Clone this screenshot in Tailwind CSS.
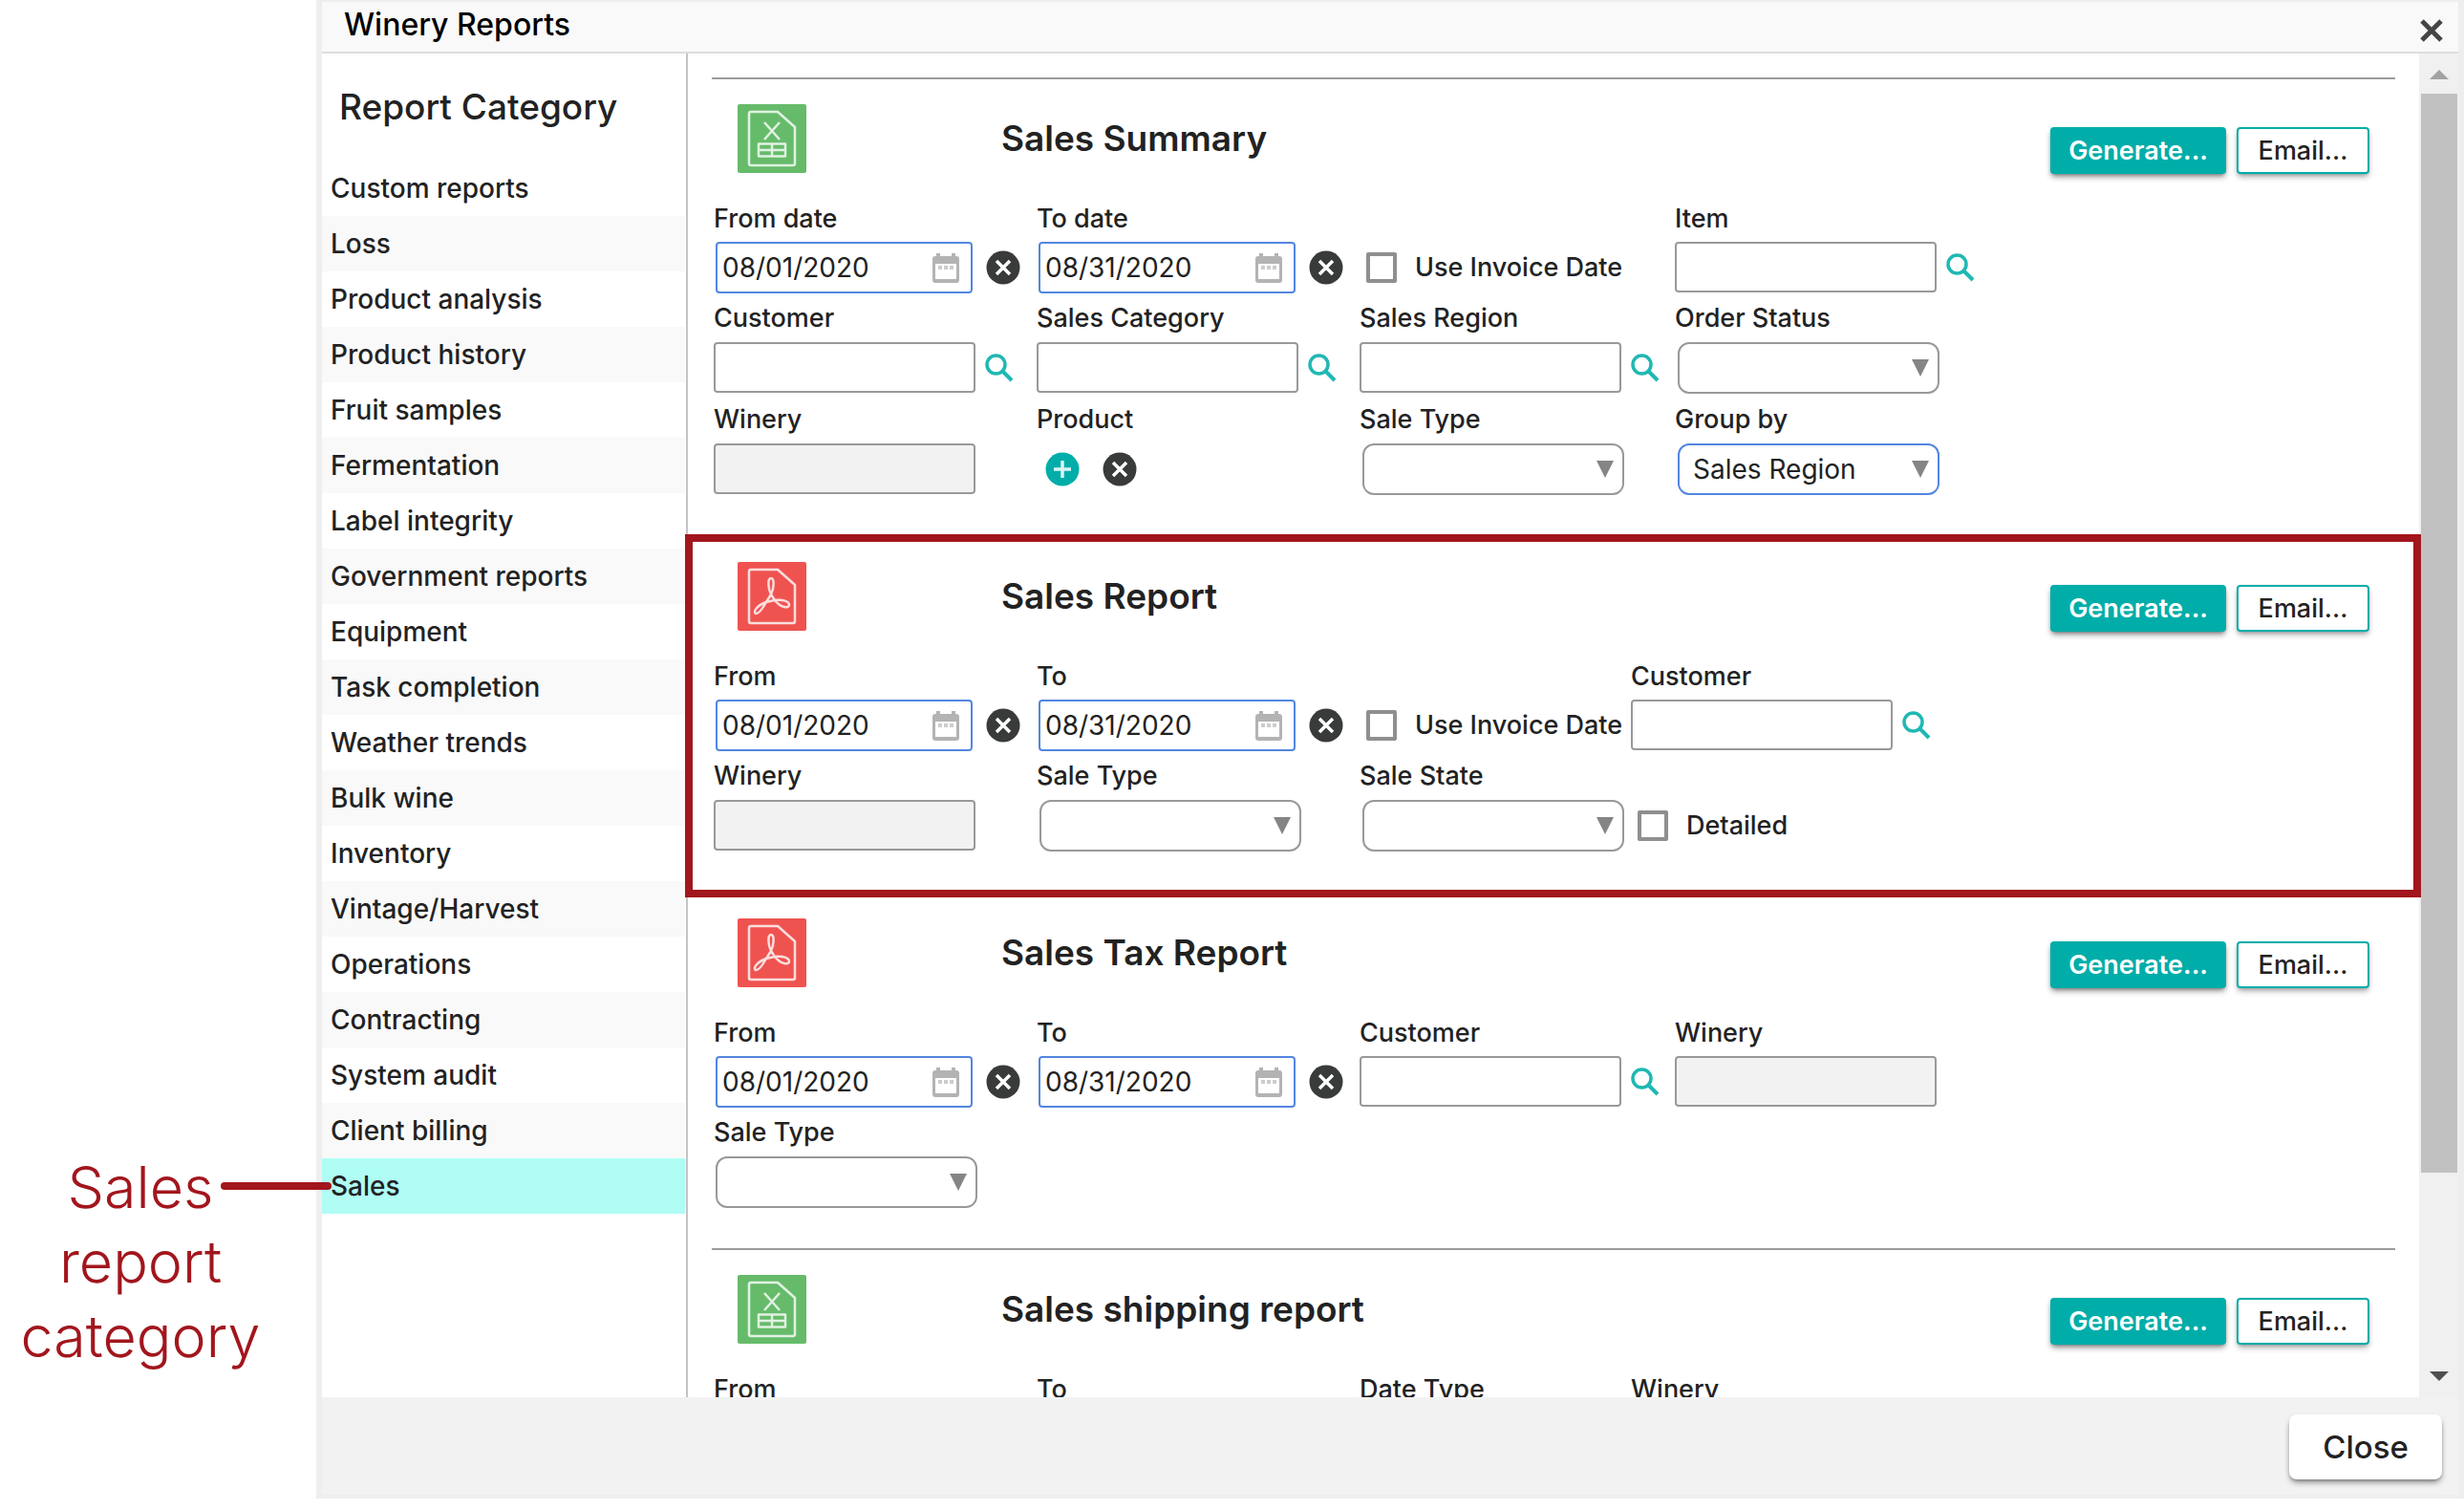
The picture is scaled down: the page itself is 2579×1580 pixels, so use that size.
<!DOCTYPE html>
<html lang="en">
<head>
<meta charset="utf-8">
<title>Winery Reports</title>
<script src="https://cdn.jsdelivr.net/npm/@tailwindcss/browser@4"></script>
</head>
<body class="bg-white font-['Inter',sans-serif] text-[27px] leading-8 font-medium text-[#222]">

<svg class="hidden" aria-hidden="true">
  <symbol id="xls" viewBox="0 0 72 72">
    <rect width="72" height="72" rx="2" fill="#66bb6a"/>
    <g fill="none" stroke="#e0f2e1" stroke-width="2.500" stroke-linejoin="round">
      <path d="M14 8h28l18 16v38a2 2 0 0 1-2 2H14a2 2 0 0 1-2-2V10a2 2 0 0 1 2-2z"/>
      <path d="M28 19l16 18M44 19L28 37"/>
      <path d="M22 41.500h28v13H22zM22 48h28M36 41.500v13"/>
    </g>
  </symbol>
  <symbol id="pdf" viewBox="0 0 72 72">
    <rect width="72" height="72" rx="2" fill="#ef5350"/>
    <g fill="none" stroke="#fcdedd" stroke-width="2.500" stroke-linejoin="round">
      <path d="M14 8h28l18 16v38a2 2 0 0 1-2 2H14a2 2 0 0 1-2-2V10a2 2 0 0 1 2-2z"/>
      <path d="M35 34c-3-6-4-17 0-17s3 11 0 17l-5 8c-4 7-8 13-11 12s0-8 11-12l9-2c8-1 15 1 15 5s-9 3-15-5z"/>
    </g>
  </symbol>
  <symbol id="cal" viewBox="0 0 28 32">
    <path d="M4 1h4v3h12V1h4v3h1a3 3 0 0 1 3 3v22a3 3 0 0 1-3 3H3a3 3 0 0 1-3-3V7a3 3 0 0 1 3-3h1z" fill="#b3b3b3"/>
    <path d="M3 12h22v16H3z" fill="#fff"/>
    <path d="M6 14h4v4H6zM12 14h4v4h-4zM18 14h4v4h-4z" fill="#ccc"/>
  </symbol>
  <symbol id="clear" viewBox="0 0 36 36">
    <circle cx="18" cy="18" r="17.500" fill="#393b3b"/>
    <path d="M11 11l14 14M25 11L11 25" stroke="#fff" stroke-width="3.500"/>
  </symbol>
  <symbol id="add" viewBox="0 0 36 36">
    <circle cx="18" cy="18" r="17.500" fill="#00ada9"/>
    <path d="M18 9v18M9 18h18" stroke="#d9f5f4" stroke-width="3.500"/>
  </symbol>
  <symbol id="find" viewBox="0 0 30 30">
    <circle cx="11.500" cy="11.500" r="9.500" fill="none" stroke="#20b8b3" stroke-width="3.500"/>
    <path d="M18 18l10 10" stroke="#20b8b3" stroke-width="4"/>
  </symbol>
  <symbol id="down" viewBox="0 0 18 18"><path d="M0 0h18L9 18z" fill="#858585"/></symbol>
</svg>

<div class="flex h-screen overflow-hidden pb-3">

  <!-- Callout beside the dialog -->
  <aside class="relative z-20 flex w-[331px] shrink-0 flex-col justify-end pb-[131px] text-[61px] leading-[78px] font-light text-[#a2161d]">
    <p class="relative w-[294px] text-center">Sales<span class="absolute top-[34px] left-[231px] h-2 w-[116px] rounded-full bg-[#a2161d]"></span></p>
    <p class="w-[294px] text-center">report</p>
    <p class="w-[294px] text-center">category</p>
  </aside>

  <div role="dialog" aria-labelledby="dlg-title" class="flex min-w-0 flex-1 flex-col border-x-[6px] border-t-2 border-b-4 border-[#eee]">
    <header class="flex h-[54px] shrink-0 items-center justify-between border-b-2 border-[#ddd] bg-[#f9f9f9] pr-4 pl-[23px]">
      <h1 id="dlg-title" class="pb-1 text-[32px] leading-9 text-black">Winery Reports</h1>
      <button type="button" aria-label="Close dialog" class="pt-2"><svg class="size-6" viewBox="0 0 24 24"><path d="M2 2l20 20M22 2L2 22" stroke="#444646" stroke-width="5"/></svg></button>
    </header>

    <div class="flex min-h-0 flex-1">
      <nav class="w-[383px] shrink-0 border-r-2 border-[#c4c4c4] text-[28px]">
        <h2 class="flex h-28 items-center pl-[18px] text-[37px] leading-10">Report Category</h2>
        <ul class="mr-px *:h-[58px] *:even:bg-[#f9f9f9]">
          <li><a href="#" class="flex h-full items-center pl-[9px]">Custom reports</a></li>
          <li><a href="#" class="flex h-full items-center pl-[9px]">Loss</a></li>
          <li><a href="#" class="flex h-full items-center pl-[9px]">Product analysis</a></li>
          <li><a href="#" class="flex h-full items-center pl-[9px]">Product history</a></li>
          <li><a href="#" class="flex h-full items-center pl-[9px]">Fruit samples</a></li>
          <li><a href="#" class="flex h-full items-center pl-[9px]">Fermentation</a></li>
          <li><a href="#" class="flex h-full items-center pl-[9px]">Label integrity</a></li>
          <li><a href="#" class="flex h-full items-center pl-[9px]">Government reports</a></li>
          <li><a href="#" class="flex h-full items-center pl-[9px]">Equipment</a></li>
          <li><a href="#" class="flex h-full items-center pl-[9px]">Task completion</a></li>
          <li><a href="#" class="flex h-full items-center pl-[9px]">Weather trends</a></li>
          <li><a href="#" class="flex h-full items-center pl-[9px]">Bulk wine</a></li>
          <li><a href="#" class="flex h-full items-center pl-[9px]">Inventory</a></li>
          <li><a href="#" class="flex h-full items-center pl-[9px]">Vintage/Harvest</a></li>
          <li><a href="#" class="flex h-full items-center pl-[9px]">Operations</a></li>
          <li><a href="#" class="flex h-full items-center pl-[9px]">Contracting</a></li>
          <li><a href="#" class="flex h-full items-center pl-[9px]">System audit</a></li>
          <li><a href="#" class="flex h-full items-center pl-[9px]">Client billing</a></li>
          <li><a href="#" aria-current="page" class="flex h-full items-center bg-[#b0fdf6] pl-[9px]">Sales</a></li>
        </ul>
      </nav>

      <div class="relative min-w-0 flex-1">
        <main class="-mr-0.5 -ml-[3px] h-full overflow-hidden pt-[25px] pr-[27px] pl-7">

          <section class="border-t-2 border-[#9b9b9b] pb-[41px] pl-0.5">
            <div class="flex h-[130px] items-start pt-[26px] pr-[27px]">
              <svg class="ml-[25px] size-[72px]"><use href="#xls"/></svg>
              <h3 class="ml-[204px] flex-1 pt-4 text-[37px] leading-10 font-semibold">Sales Summary</h3>
              <div class="flex gap-[11px] pt-6">
                <button type="button" class="h-[49px] w-[184px] rounded bg-[#00ada9] font-semibold text-white shadow-md shadow-black/40">Generate...</button>
                <button type="button" class="h-[49px] w-[139px] rounded border-2 border-[#00ada9] bg-white shadow-md shadow-black/30">Email...</button>
              </div>
            </div>
            <div class="grid grid-cols-[338px_338px_330px_1fr] gap-y-3">
              <div><label for="a1" class="block h-10">From date</label>
                <div class="flex h-[54px] items-center pl-0.5"><div class="flex h-full w-[269px] items-center rounded border-2 border-[#5386e0] pr-3 pl-[5px]"><input id="a1" type="text" value="08/01/2020" class="w-full min-w-0 flex-1 text-[28px] font-normal"><svg class="h-8 w-7"><use href="#cal"/></svg></div><button type="button" aria-label="Clear from date" class="ml-3.5"><svg class="size-9"><use href="#clear"/></svg></button></div></div>
              <div><label for="a2" class="block h-10">To date</label>
                <div class="flex h-[54px] items-center pl-0.5"><div class="flex h-full w-[269px] items-center rounded border-2 border-[#5386e0] pr-3 pl-[5px]"><input id="a2" type="text" value="08/31/2020" class="w-full min-w-0 flex-1 text-[28px] font-normal"><svg class="h-8 w-7"><use href="#cal"/></svg></div><button type="button" aria-label="Clear to date" class="ml-3.5"><svg class="size-9"><use href="#clear"/></svg></button></div></div>
              <div class="flex items-end"><label class="flex h-[54px] items-center gap-[19px] pl-[7px] whitespace-nowrap"><input type="checkbox" class="size-8 appearance-none rounded-xs border-4 border-[#8f8f8f] bg-white">Use Invoice Date</label></div>
              <div><label for="a3" class="block h-10">Item</label>
                <div class="flex gap-[10px]"><input id="a3" type="text" class="h-[53px] w-[274px] rounded border-2 border-[#999] px-2"><button type="button" aria-label="Find item"><svg class="size-[30px]"><use href="#find"/></svg></button></div></div>

              <div><label for="a4" class="block h-[39px] leading-7">Customer</label>
                <div class="flex gap-[10px]"><input id="a4" type="text" class="h-[53px] w-[274px] rounded border-2 border-[#999] px-2"><button type="button" aria-label="Find customer"><svg class="size-[30px]"><use href="#find"/></svg></button></div></div>
              <div><label for="a5" class="block h-[39px] leading-7">Sales Category</label>
                <div class="flex gap-[10px]"><input id="a5" type="text" class="h-[53px] w-[274px] rounded border-2 border-[#999] px-2"><button type="button" aria-label="Find sales category"><svg class="size-[30px]"><use href="#find"/></svg></button></div></div>
              <div><label for="a6" class="block h-[39px] leading-7">Sales Region</label>
                <div class="flex gap-[10px]"><input id="a6" type="text" class="h-[53px] w-[274px] rounded border-2 border-[#999] px-2"><button type="button" aria-label="Find sales region"><svg class="size-[30px]"><use href="#find"/></svg></button></div></div>
              <div class="pb-px"><label for="a7" class="block h-[39px] leading-7">Order Status</label>
                <div class="relative ml-[3px] h-[54px] w-[274px]"><select id="a7" class="size-full appearance-none rounded-xl border-2 border-[#999] bg-white px-3.5 text-[28px] font-normal"><option></option></select><svg class="pointer-events-none absolute top-[18px] right-[11px] size-[18px]"><use href="#down"/></svg></div></div>

              <div><label for="a8" class="block h-[39px] leading-7">Winery</label>
                <input id="a8" type="text" disabled class="block h-[53px] w-[274px] rounded border-2 border-[#999] bg-[#f2f2f2] px-2"></div>
              <div><span class="block h-[39px] leading-7">Product</span>
                <div class="flex h-[54px] items-center gap-6 pl-[9px]"><button type="button" aria-label="Add product"><svg class="size-9"><use href="#add"/></svg></button><button type="button" aria-label="Clear products"><svg class="size-9"><use href="#clear"/></svg></button></div></div>
              <div><label for="a9" class="block h-[39px] leading-7">Sale Type</label>
                <div class="relative ml-[3px] h-[54px] w-[274px]"><select id="a9" class="size-full appearance-none rounded-xl border-2 border-[#999] bg-white px-3.5 text-[28px] font-normal"><option></option></select><svg class="pointer-events-none absolute top-[18px] right-[11px] size-[18px]"><use href="#down"/></svg></div></div>
              <div class="pb-px"><label for="a10" class="block h-[39px] leading-7">Group by</label>
                <div class="relative ml-[3px] h-[54px] w-[274px]"><select id="a10" class="size-full appearance-none rounded-xl border-2 border-[#5386e0] bg-white px-3.5 text-[28px] font-normal"><option>Sales Region</option></select><svg class="pointer-events-none absolute top-[18px] right-[11px] size-[18px]"><use href="#down"/></svg></div></div>
            </div>
          </section>

          <section class="relative border-t-2 border-[#9b9b9b] pb-[41px] pl-0.5">
            <!-- Highlight frame round this report -->
            <div class="pointer-events-none absolute -top-[3px] -right-[27px] -bottom-[6px] -left-7 z-10 border-8 border-[#a2161d]"></div>
            <div class="flex h-[130px] items-start pt-[26px] pr-[27px]">
              <svg class="ml-[25px] size-[72px]"><use href="#pdf"/></svg>
              <h3 class="ml-[204px] flex-1 pt-4 text-[37px] leading-10 font-semibold">Sales Report</h3>
              <div class="flex gap-[11px] pt-6">
                <button type="button" class="h-[49px] w-[184px] rounded bg-[#00ada9] font-semibold text-white shadow-md shadow-black/40">Generate...</button>
                <button type="button" class="h-[49px] w-[139px] rounded border-2 border-[#00ada9] bg-white shadow-md shadow-black/30">Email...</button>
              </div>
            </div>
            <div class="grid grid-cols-[338px_338px_284px_1fr] gap-y-3">
              <div><label for="b1" class="block h-10">From</label>
                <div class="flex h-[54px] items-center pl-0.5"><div class="flex h-full w-[269px] items-center rounded border-2 border-[#5386e0] pr-3 pl-[5px]"><input id="b1" type="text" value="08/01/2020" class="w-full min-w-0 flex-1 text-[28px] font-normal"><svg class="h-8 w-7"><use href="#cal"/></svg></div><button type="button" aria-label="Clear from date" class="ml-3.5"><svg class="size-9"><use href="#clear"/></svg></button></div></div>
              <div><label for="b2" class="block h-10">To</label>
                <div class="flex h-[54px] items-center pl-0.5"><div class="flex h-full w-[269px] items-center rounded border-2 border-[#5386e0] pr-3 pl-[5px]"><input id="b2" type="text" value="08/31/2020" class="w-full min-w-0 flex-1 text-[28px] font-normal"><svg class="h-8 w-7"><use href="#cal"/></svg></div><button type="button" aria-label="Clear to date" class="ml-3.5"><svg class="size-9"><use href="#clear"/></svg></button></div></div>
              <div class="flex items-end"><label class="flex h-[54px] items-center gap-[19px] pl-[7px] whitespace-nowrap"><input type="checkbox" class="size-8 appearance-none rounded-xs border-4 border-[#8f8f8f] bg-white">Use Invoice Date</label></div>
              <div><label for="b3" class="block h-10">Customer</label>
                <div class="flex gap-[10px]"><input id="b3" type="text" class="h-[53px] w-[274px] rounded border-2 border-[#999] px-2"><button type="button" aria-label="Find customer"><svg class="size-[30px]"><use href="#find"/></svg></button></div></div>

              <div><label for="b4" class="block h-[39px] leading-7">Winery</label>
                <input id="b4" type="text" disabled class="block h-[53px] w-[274px] rounded border-2 border-[#999] bg-[#f2f2f2] px-2"></div>
              <div class="pb-px"><label for="b5" class="block h-[39px] leading-7">Sale Type</label>
                <div class="relative ml-[3px] h-[54px] w-[274px]"><select id="b5" class="size-full appearance-none rounded-xl border-2 border-[#999] bg-white px-3.5 text-[28px] font-normal"><option></option></select><svg class="pointer-events-none absolute top-[18px] right-[11px] size-[18px]"><use href="#down"/></svg></div></div>
              <div><label for="b6" class="block h-[39px] leading-7">Sale State</label>
                <div class="relative ml-[3px] h-[54px] w-[274px]"><select id="b6" class="size-full appearance-none rounded-xl border-2 border-[#999] bg-white px-3.5 text-[28px] font-normal"><option></option></select><svg class="pointer-events-none absolute top-[18px] right-[11px] size-[18px]"><use href="#down"/></svg></div></div>
              <div class="flex items-end pb-px"><label class="flex h-[54px] items-center gap-[19px] pl-[7px] whitespace-nowrap"><input type="checkbox" class="size-8 appearance-none rounded-xs border-4 border-[#8f8f8f] bg-white">Detailed</label></div>
            </div>
          </section>

          <section class="border-t-2 border-[#9b9b9b] pb-[41px] pl-0.5">
            <div class="flex h-[130px] items-start pt-[26px] pr-[27px]">
              <svg class="ml-[25px] size-[72px]"><use href="#pdf"/></svg>
              <h3 class="ml-[204px] flex-1 pt-4 text-[37px] leading-10 font-semibold">Sales Tax Report</h3>
              <div class="flex gap-[11px] pt-6">
                <button type="button" class="h-[49px] w-[184px] rounded bg-[#00ada9] font-semibold text-white shadow-md shadow-black/40">Generate...</button>
                <button type="button" class="h-[49px] w-[139px] rounded border-2 border-[#00ada9] bg-white shadow-md shadow-black/30">Email...</button>
              </div>
            </div>
            <div class="grid grid-cols-[338px_338px_330px_1fr] gap-y-3">
              <div><label for="c1" class="block h-10">From</label>
                <div class="flex h-[54px] items-center pl-0.5"><div class="flex h-full w-[269px] items-center rounded border-2 border-[#5386e0] pr-3 pl-[5px]"><input id="c1" type="text" value="08/01/2020" class="w-full min-w-0 flex-1 text-[28px] font-normal"><svg class="h-8 w-7"><use href="#cal"/></svg></div><button type="button" aria-label="Clear from date" class="ml-3.5"><svg class="size-9"><use href="#clear"/></svg></button></div></div>
              <div><label for="c2" class="block h-10">To</label>
                <div class="flex h-[54px] items-center pl-0.5"><div class="flex h-full w-[269px] items-center rounded border-2 border-[#5386e0] pr-3 pl-[5px]"><input id="c2" type="text" value="08/31/2020" class="w-full min-w-0 flex-1 text-[28px] font-normal"><svg class="h-8 w-7"><use href="#cal"/></svg></div><button type="button" aria-label="Clear to date" class="ml-3.5"><svg class="size-9"><use href="#clear"/></svg></button></div></div>
              <div><label for="c3" class="block h-10">Customer</label>
                <div class="flex gap-[10px]"><input id="c3" type="text" class="h-[53px] w-[274px] rounded border-2 border-[#999] px-2"><button type="button" aria-label="Find customer"><svg class="size-[30px]"><use href="#find"/></svg></button></div></div>
              <div><label for="c4" class="block h-10">Winery</label>
                <input id="c4" type="text" disabled class="block h-[53px] w-[274px] rounded border-2 border-[#999] bg-[#f2f2f2] px-2"></div>

              <div class="pb-px"><label for="c5" class="block h-[39px] leading-7">Sale Type</label>
                <div class="relative ml-0.5 h-[54px] w-[274px]"><select id="c5" class="size-full appearance-none rounded-xl border-2 border-[#999] bg-white px-3.5 text-[28px] font-normal"><option></option></select><svg class="pointer-events-none absolute top-[18px] right-[11px] size-[18px]"><use href="#down"/></svg></div></div>
            </div>
          </section>

          <section class="border-t-2 border-[#9b9b9b] pb-[41px] pl-0.5">
            <div class="flex h-[130px] items-start pt-[26px] pr-[27px]">
              <svg class="ml-[25px] size-[72px]"><use href="#xls"/></svg>
              <h3 class="ml-[204px] flex-1 pt-4 text-[37px] leading-10 font-semibold">Sales shipping report</h3>
              <div class="flex gap-[11px] pt-6">
                <button type="button" class="h-[49px] w-[184px] rounded bg-[#00ada9] font-semibold text-white shadow-md shadow-black/40">Generate...</button>
                <button type="button" class="h-[49px] w-[139px] rounded border-2 border-[#00ada9] bg-white shadow-md shadow-black/30">Email...</button>
              </div>
            </div>
            <div class="grid grid-cols-[338px_338px_284px_1fr] gap-y-3">
              <span class="block h-10">From</span>
              <span class="block h-10">To</span>
              <span class="block h-10">Date Type</span>
              <span class="block h-10">Winery</span>
            </div>
          </section>
        </main>
      </div>

      <!-- Scroll bar -->
      <div class="flex w-[41px] shrink-0 flex-col items-center bg-[#f0f0f0]">
        <div class="flex h-[42px] items-end pb-[15px]"><svg class="h-[10px] w-5" viewBox="0 0 20 10"><path d="M0 10L10 0l10 10z" fill="#a3a3a3"/></svg></div>
        <div class="h-[1129px] w-[38px] bg-[#c1c1c1]"></div>
        <div class="mt-auto pb-[17px]"><svg class="h-[10px] w-5" viewBox="0 0 20 10"><path d="M0 0h20L10 10z" fill="#505050"/></svg></div>
      </div>
    </div>

    <footer class="flex h-[102px] shrink-0 items-start justify-end bg-[#f2f2f2] pt-[18px] pr-[17px]">
      <button type="button" class="h-[68px] w-40 rounded-lg bg-white text-[33px] shadow-md shadow-black/40">Close</button>
    </footer>
  </div>
</div>
</body>
</html>
